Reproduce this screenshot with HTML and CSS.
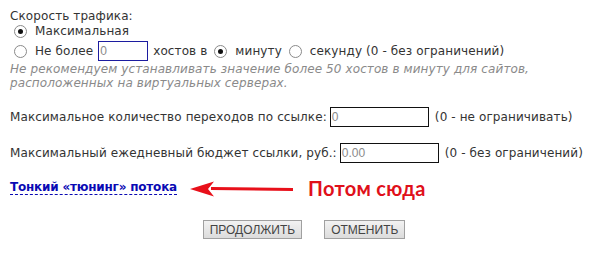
FILE: index.html
```html
<!DOCTYPE html>
<html lang="ru">
<head>
<meta charset="utf-8">
<link rel="stylesheet" href="styles.css">
</head>
<body>
<div class="page">
  <div class="speed">
    <div class="title">Скорость трафика:</div>
    <div class="row"><span class="radio on"></span><span class="lbl">Максимальная</span></div>
    <div class="row row-input"><span class="radio"></span><span class="lbl">Не более</span><span class="field field-focus w50">0</span><span class="lbl">хостов в</span><span class="radio on gapl"></span><span class="lbl">минуту</span><span class="radio gapl"></span><span class="lbl">секунду (0 - без ограничений)</span></div>
    <p class="hint">Не рекомендуем устанавливать значение более 50 хостов в минуту для сайтов, расположенных на виртуальных серверах.</p>
  </div>

  <div class="line l1"><span class="lbl">Максимальное количество переходов по ссылке:</span><span class="field w99">0</span><span class="lbl">(0 - не ограничивать)</span></div>
  <div class="line l2"><span class="lbl">Максимальный ежедневный бюджет ссылки, руб.:</span><span class="field w99">0.00</span><span class="lbl">(0 - без ограничений)</span></div>

  <div class="tune">
    <a class="link" href="#">Тонкий «тюнинг» потока</a>
    <svg class="arrow" width="104" height="18" viewBox="0 0 104 18">
      <path d="M104 9.5 L22 8.5" stroke="#e8101a" stroke-width="3" fill="none"/>
      <path d="M1 9 L25 1.5 L19 9 L25 16.5 Z" fill="#e8101a"/>
    </svg>
    <span class="note">Потом сюда</span>
  </div>

  <div class="buttons">
    <button class="btn">ПРОДОЛЖИТЬ</button>
    <button class="btn">ОТМЕНИТЬ</button>
  </div>
</div>
</body>
</html>
```

FILE: styles.css
```css
html, body {
  margin: 0;
  padding: 0;
  background: #fff;
}
.page {
  width: 610px;
  height: 258px;
  padding: 9px 0 0 10px;
  box-sizing: border-box;
  font-family: "DejaVu Sans", Verdana, sans-serif;
  font-size: 12px;
  letter-spacing: 0.1px;
  color: #333;
}
.title {
  line-height: 14px;
}
.row {
  display: flex;
  align-items: center;
  padding-left: 4px;
  height: 14px;
  margin-top: 1px;
}
.row-input {
  margin-top: 3px;
  height: 20px;
}
.lbl {
  white-space: nowrap;
}
.radio {
  display: inline-block;
  width: 11px;
  height: 11px;
  border: 1px solid #8a8a8a;
  border-radius: 50%;
  background: #fff;
  margin-right: 8px;
  position: relative;
  flex: none;
}
.radio.on::after {
  content: "";
  position: absolute;
  left: 3px;
  top: 3px;
  width: 5px;
  height: 5px;
  border-radius: 50%;
  background: #111;
}
.gapl {
  margin-left: 7px;
}
.field {
  display: inline-block;
  box-sizing: border-box;
  height: 20px;
  border: 1px solid #111;
  color: #8a8a8a;
  font-family: "Liberation Sans", Arial, sans-serif;
  font-size: 12px;
  letter-spacing: 0;
  line-height: 18px;
  padding-left: 1px;
  background: #fff;
  margin: 0 6px 0 3px;
  flex: none;
}
.field-focus {
  border-color: #1c1ca0;
  margin: 0 5px 0 5px;
}
.w50 { width: 50px; }
.w99 { width: 99px; }
.hint {
  margin: 1px 0 0;
  font-style: italic;
  color: #8a8a8a;
  line-height: 14px;
  width: 530px;
}
.line {
  display: flex;
  align-items: center;
  height: 20px;
}
.l1 { margin-top: 17px; }
.l2 { margin-top: 16px; }
.tune {
  display: flex;
  align-items: center;
  margin-top: 13px;
  height: 24px;
}
.link {
  font-weight: bold;
  color: #0a0ab4;
  text-decoration: none;
  border-bottom: 1px dashed #0a0ab4;
  line-height: 13px;
  letter-spacing: -0.2px;
}
.arrow {
  margin-left: 12px;
  margin-top: 1px;
}
.note {
  margin-left: 15px;
  font-family: Lato, "Open Sans", sans-serif;
  font-weight: bold;
  font-size: 20px;
  letter-spacing: 0.3px;
  color: #e0101a;
}
.buttons {
  display: flex;
  justify-content: center;
  gap: 22px;
  margin-top: 20px;
  padding-right: 12px;
}
.btn {
  font-family: "Liberation Sans", Arial, sans-serif;
  font-size: 12px;
  color: #444;
  background: linear-gradient(#f2f2f2, #dcdcdc);
  border: 1px solid #a0a0a0;
  height: 19px;
  padding: 0 6px;
  border-radius: 0;
}
```
